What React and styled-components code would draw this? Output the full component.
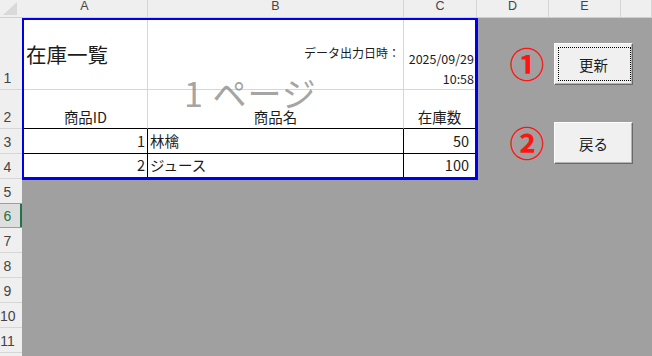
import React from 'react';
import styled, { createGlobalStyle } from 'styled-components';

const GlobalStyle = createGlobalStyle`
  html, body {
    margin: 0;
    padding: 0;
    background: #a0a0a0;
  }
  body {
    font-family: "Noto Sans CJK JP", "Noto Sans", sans-serif;
  }
  * {
    box-sizing: border-box;
  }
`;

const GRID = '#d6d6d6';
const INK = '#1c1c1c';

const columns = [
  { key: 'A', width: 126 },
  { key: 'B', width: 256 },
  { key: 'C', width: 73 },
  { key: 'D', width: 72 },
  { key: 'E', width: 72 },
];

const rows = [
  { n: 1, h: 72 },
  { n: 2, h: 39 },
  { n: 3, h: 25 },
  { n: 4, h: 25 },
  { n: 5, h: 25 },
  { n: 6, h: 25, selected: true },
  { n: 7, h: 25 },
  { n: 8, h: 25 },
  { n: 9, h: 25 },
  { n: 10, h: 25 },
  { n: 11, h: 25 },
];

const Page = styled.div`
  width: 652px;
  height: 356px;
  overflow: hidden;
  display: flex;
  flex-direction: column;
  background: #a0a0a0;
`;

const ColHeaderBar = styled.div`
  display: flex;
  height: 18px;
  flex: none;
  background: #efefef;
  border-bottom: 1px solid #cfcfcf;
`;

const Corner = styled.div`
  width: 22px;
  flex: none;
  display: flex;
`;

const ColHead = styled.div`
  width: ${p => (p.$width ? `${p.$width}px` : 'auto')};
  flex: ${p => (p.$width ? 'none' : '1')};
  border-right: 1px solid ${GRID};
  font-family: "Liberation Sans", Arial, sans-serif;
  font-size: 12.5px;
  line-height: 12px;
  color: #444;
  text-align: center;
`;

const Body = styled.div`
  flex: 1;
  display: flex;
  min-height: 0;
`;

const RowHeaders = styled.div`
  width: 22px;
  flex: none;
  display: flex;
  flex-direction: column;
  background: #efefef;
`;

const RowHead = styled.div`
  height: ${p => p.$h}px;
  flex: none;
  display: flex;
  align-items: flex-end;
  padding-bottom: 4px;
  border-bottom: 1px solid ${p => (p.$selected ? '#9e9e9e' : GRID)};
  border-top: ${p => (p.$selected ? '1px solid #9e9e9e' : 'none')};
  margin-top: ${p => (p.$selected ? '-1px' : '0')};
  background: ${p => (p.$selected ? '#dedede' : 'transparent')};
  box-shadow: ${p => (p.$selected ? 'inset -2px 0 0 #217346' : 'none')};
  font-family: "Liberation Sans", Arial, sans-serif;
  font-size: 14px;
  line-height: 14px;
  color: ${p => (p.$selected ? '#217346' : '#444')};
`;

const RowLabel = styled.span`
  width: 15px;
  text-align: center;
`;

const SheetArea = styled.div`
  flex: 1;
  display: flex;
  align-items: flex-start;
  background: #a0a0a0;
`;

const PrintArea = styled.div`
  position: relative;
  width: 456px;
  flex: none;
  display: grid;
  grid-template-columns: 124px 256px 71px;
  grid-template-rows: 70px 39px 25px 23px;
  background: #fff;
  border-style: solid;
  border-color: #0000e6;
  border-width: 2px 3px 3px 2px;
`;

const Cell = styled.div`
  display: flex;
  flex-direction: column;
  justify-content: ${p => p.$v || 'center'};
  text-align: ${p => p.$align || 'left'};
  padding: ${p => p.$pad || '0 2px'};
  border-right: ${p => (p.$right ? `1px solid ${p.$right}` : 'none')};
  border-bottom: ${p => (p.$bottom ? `1px solid ${p.$bottom}` : 'none')};
  font-size: ${p => p.$size || 14.5}px;
  line-height: 20px;
  color: ${INK};
  white-space: nowrap;
`;

const Watermark = styled.div`
  position: absolute;
  left: 160px;
  top: 56px;
  font-family: "Noto Sans CJK JP", sans-serif;
  font-size: 34px;
  line-height: 34px;
  color: rgba(140, 140, 140, 0.8);
  letter-spacing: 1px;
  pointer-events: none;
  white-space: pre;
`;

const Controls = styled.div`
  display: flex;
  flex-direction: column;
  gap: 37px;
  margin-left: 31px;
  padding-top: 25px;
`;

const ControlRow = styled.div`
  display: flex;
  align-items: center;
  gap: 9px;
`;

const Marker = styled.span`
  width: 36px;
  font-size: 35px;
  line-height: 36px;
  font-weight: 700;
  color: #ff1414;
  text-align: center;
  margin-top: -3px;
`;

const SheetButton = styled.button`
  position: relative;
  width: 79px;
  height: 42px;
  padding: 0;
  background: #f0f0f0;
  border: 1px solid;
  border-color: #fdfdfd #696969 #696969 #fdfdfd;
  box-shadow: inset -1px -1px 0 #b4b4b4;
  font-family: "Noto Sans CJK JP", sans-serif;
  font-size: 14.5px;
  color: ${INK};

  &::after {
    content: '';
    display: ${p => (p.$focused ? 'block' : 'none')};
    position: absolute;
    left: 3px;
    top: 3px;
    right: 1px;
    bottom: 3px;
    border: 1px dotted #000;
  }
`;

const cells = [
  { text: '在庫一覧', size: 20.5, right: GRID, bottom: GRID, pad: '0 2px 2px 2px' },
  { text: 'データ出力日時：', size: 12, align: 'right', right: GRID, bottom: GRID, pad: '0 3px 4px 0' },
  { text: ['2025/09/29', '10:58'], size: 12.5, align: 'right', v: 'flex-end', bottom: GRID, pad: '0 1px 0 0' },
  { text: '商品ID', align: 'center', v: 'flex-end', right: GRID, bottom: '#000', pad: '0 0 1px 0' },
  { text: '商品名', align: 'center', v: 'flex-end', right: GRID, bottom: '#000', pad: '0 0 1px 0' },
  { text: '在庫数', align: 'center', v: 'flex-end', bottom: '#000', pad: '0 0 1px 0' },
  { text: '1', align: 'right', right: '#000', bottom: '#000' },
  { text: '林檎', right: '#000', bottom: '#000' },
  { text: '50', align: 'right', bottom: '#000', pad: '0 6px 0 0' },
  { text: '2', align: 'right', right: '#000', pad: '0 2px 2px 0' },
  { text: 'ジュース', right: '#000', pad: '0 2px 2px 2px' },
  { text: '100', align: 'right', pad: '0 6px 2px 0' },
];

export default function App() {
  return (
    <Page>
      <GlobalStyle />
      <ColHeaderBar>
        <Corner>
          <svg width="22" height="17" viewBox="0 0 22 17">
            <polygon points="3,15 17,15 17,2" fill="#d9d9d9" />
          </svg>
        </Corner>
        {columns.map(c => (
          <ColHead key={c.key} $width={c.width}>{c.key}</ColHead>
        ))}
        <ColHead />
      </ColHeaderBar>
      <Body>
        <RowHeaders>
          {rows.map(r => (
            <RowHead key={r.n} $h={r.h} $selected={r.selected}>
              <RowLabel>{r.n}</RowLabel>
            </RowHead>
          ))}
        </RowHeaders>
        <SheetArea>
          <PrintArea>
            {cells.map((c, i) => (
              <Cell
                key={i}
                $align={c.align}
                $v={c.v}
                $right={c.right}
                $bottom={c.bottom}
                $size={c.size}
                $pad={c.pad}
              >
                {Array.isArray(c.text)
                  ? c.text.map(line => <span key={line}>{line}</span>)
                  : c.text}
              </Cell>
            ))}
            <Watermark>{'1 ページ'}</Watermark>
          </PrintArea>
          <Controls>
            <ControlRow>
              <Marker>①</Marker>
              <SheetButton $focused>更新</SheetButton>
            </ControlRow>
            <ControlRow>
              <Marker>②</Marker>
              <SheetButton>戻る</SheetButton>
            </ControlRow>
          </Controls>
        </SheetArea>
      </Body>
    </Page>
  );
}
